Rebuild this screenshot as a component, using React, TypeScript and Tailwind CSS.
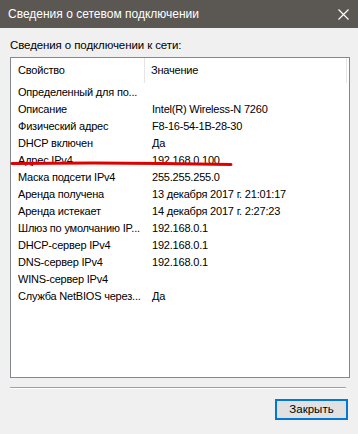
import React from "react";

const rows: [string, string][] = [
  ["Определенный для по...", ""],
  ["Описание", "Intel(R) Wireless-N 7260"],
  ["Физический адрес", "F8-16-54-1B-28-30"],
  ["DHCP включен", "Да"],
  ["Адрес IPv4", "192.168.0.100"],
  ["Маска подсети IPv4", "255.255.255.0"],
  ["Аренда получена", "13 декабря 2017 г. 21:01:17"],
  ["Аренда истекает", "14 декабря 2017 г. 2:27:23"],
  ["Шлюз по умолчанию IP...", "192.168.0.1"],
  ["DHCP-сервер IPv4", "192.168.0.1"],
  ["DNS-сервер IPv4", "192.168.0.1"],
  ["WINS-сервер IPv4", ""],
  ["Служба NetBIOS через...", "Да"],
];

export default function App() {
  return (
    <div
      className="relative w-[358px] h-[434px] bg-[#f0f0f0] text-black overflow-hidden"
      style={{ fontFamily: '"Liberation Sans", Arial, sans-serif' }}
    >
      {/* title bar */}
      <div className="h-[28px] bg-[#5b5753] flex items-center justify-between pl-[8px] pr-[9px]">
        <span className="text-white text-[12px] leading-none">Сведения о сетевом подключении</span>
        <svg width="11" height="11" viewBox="0 0 11 11">
          <path d="M0.5 0.5 L10.5 10.5 M10.5 0.5 L0.5 10.5" stroke="#fff" strokeWidth="1.2" />
        </svg>
      </div>

      <div className="px-[10px] pt-[10px]">
        <div className="text-[11.5px] leading-[14px] h-[19px] tracking-[-0.1px]">Сведения о подключении к сети:</div>

        {/* list view */}
        <div className="w-[340px] h-[321px] border border-[#828790] bg-white text-[11px] tracking-[-0.2px]">
          <div className="h-[25px] flex items-center">
            <div className="w-[134px] h-full flex items-center pl-[7px] border-r border-[#e5e5e5]">Свойство</div>
            <div className="w-[202px] h-full flex items-center pl-[6px] border-r border-[#e5e5e5]">Значение</div>
          </div>
          <div className="pt-[1px]">
            {rows.map(([k, v], i) => (
              <div key={i} className="h-[17px] flex items-center">
                <div className="w-[134px] shrink-0 pl-[7px] whitespace-nowrap overflow-hidden">{k}</div>
                <div className="pl-[7px] whitespace-nowrap">{v}</div>
              </div>
            ))}
          </div>
        </div>

        {/* separator */}
        <div className="mt-[9px] w-[336px] h-[2px] border-t border-[#a0a0a0] border-b border-b-white" />

        <div className="flex justify-end mt-[10px]">
          <button className="w-[73px] h-[21px] bg-[#e1e1e1] border-2 border-[#0078d7] text-[11.5px] leading-none flex items-center justify-center">
            Закрыть
          </button>
        </div>
      </div>

      {/* red underline marking */}
      <svg className="absolute left-0 top-0 pointer-events-none" width="358" height="434">
        <path d="M12 163.5 Q 120 162 231 164.5" stroke="#e00000" strokeWidth="3" fill="none" strokeLinecap="round" />
      </svg>
    </div>
  );
}
